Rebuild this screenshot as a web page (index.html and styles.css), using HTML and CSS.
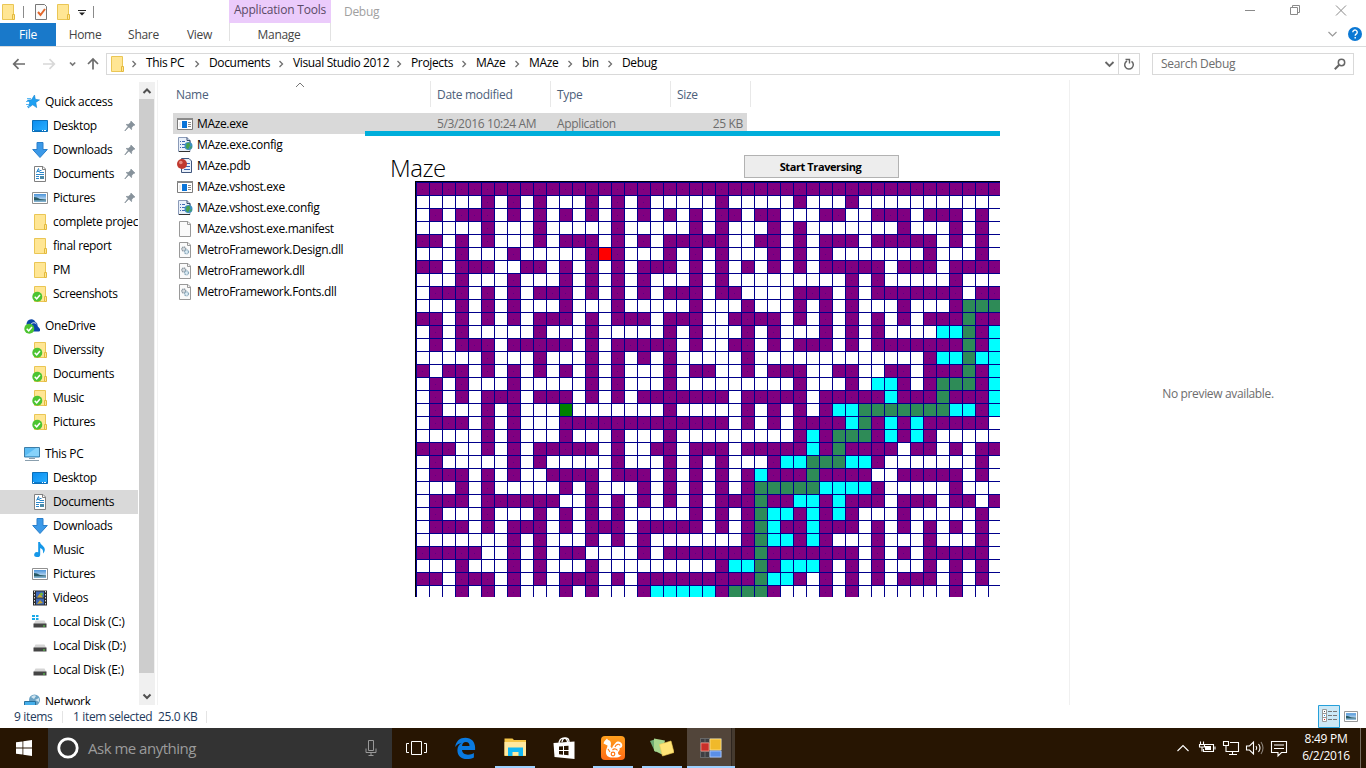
FILE: index.html
```html
<!DOCTYPE html>
<html lang="en">
<head>
<meta charset="utf-8">
<title>Debug</title>
<link rel="stylesheet" href="styles.css">
</head>
<body>
<svg class="defs" aria-hidden="true">
  <defs>
    <linearGradient id="gBlue" x1="0" y1="0" x2="1" y2="1"><stop offset="0" stop-color="#0a8df0"/><stop offset="1" stop-color="#2bb0ff"/></linearGradient>
    <linearGradient id="gSky" x1="0" y1="0" x2="0" y2="1"><stop offset="0" stop-color="#4a93d8"/><stop offset="1" stop-color="#eef7fc"/></linearGradient>
    <linearGradient id="gOrange" x1="0" y1="0" x2="0" y2="1"><stop offset="0" stop-color="#ffa01e"/><stop offset="1" stop-color="#ff6a14"/></linearGradient>
  </defs>
  <symbol id="folder" viewBox="0 0 16 16"><path d="M2.5.5h11v15h-11z" fill="#ffe694" stroke="#eac655"/><path d="M12.500 15.500v-5h2v5z" fill="#ffe694" stroke="#e3b93c"/></symbol>
  <symbol id="check" viewBox="0 0 16 16"><circle cx="5.3" cy="10.7" r="5" fill="#4cc431"/><path d="M2.7 10.8l2 2 3.3-3.8" fill="none" stroke="#fff" stroke-width="1.5"/></symbol>
  <symbol id="folderok" viewBox="0 0 16 16"><use href="#folder"/><use href="#check"/></symbol>
  <symbol id="star" viewBox="0 0 16 16"><path d="M10.500 1l.8 4.300 4.200.6-3.700 2.500.9 5.200-4-2.800-4.600 3.200 1.600-5.300-2.400-2.600 4.200-.3z" fill="#1da0f2" stroke="#1583d0" stroke-width=".6"/><path d="M3 4.500h4M2 7.500h3M2 10.500h3M3 12.500h3" stroke="#5ab9f5"/></symbol>
  <symbol id="desktop" viewBox="0 0 16 16"><path d="M.5 2.500h15v11h-15z" fill="url(#gBlue)" stroke="#0b6fb8"/><path d="M1 12.500h14" stroke="#0a7bd0"/><path d="M1 12.500h1M10 12.500h1M12 12.500h2" stroke="#fff"/></symbol>
  <symbol id="down" viewBox="0 0 16 16"><path d="M5 .5h6v7h4.300L8 15.500.7 7.500H5z" fill="#3b99e8" stroke="#2a7fca"/></symbol>
  <symbol id="doc" viewBox="0 0 16 16"><path d="M2.500.5h8.500l2.500 2.500v12.500h-11z" fill="#fff" stroke="#808080"/><path d="M10.500 .5v3h3" fill="none" stroke="#808080"/><path d="M4.500 6.500l2-4 1 4M5 5.500h2M8 4.500h1.500M8 6.500h4M4 8.500h8M4 10.500h3M4 12.500h3" fill="none" stroke="#2c87c9"/><path d="M8 10h4v3H8z" fill="#4b8aa8"/></symbol>
  <symbol id="scene" viewBox="0 0 12 8"><path d="M0 0h12v8H0z" fill="url(#gSky)"/><path d="M0 3q3 0 6 2l6 .5v1.200H0z" fill="#285a66"/><path d="M0 6.500h12V8H0z" fill="#7fb0cf"/></symbol>
  <symbol id="pic" viewBox="0 0 16 16"><path d="M.5 2.500h15v11H.5z" fill="#fff" stroke="#909090"/><use href="#scene" x="2" y="4" width="12" height="8"/></symbol>
  <symbol id="pin" viewBox="0 0 12 12"><path d="M7 1l4 4-1.300.4-1.900 1.900-.3 2.400L4.900 7 1 11 .8 10.800 4.100 6.200 2 4.500l2.600-.2 1.900-1.900z" fill="#87929b" stroke="#87929b" stroke-width=".6"/></symbol>
  <symbol id="cloud" viewBox="0 0 16 16"><path d="M3 8a4.500 4.500 0 018.500-4A3.800 3.800 0 0113.500 8l2.500 3a2 2 0 01-1 2.500H6z" fill="#0d47a8"/><path d="M6.500 7a3.500 3.500 0 016-1" fill="none" stroke="#fff" stroke-width=".8"/><use href="#check"/></symbol>
  <symbol id="pc" viewBox="0 0 16 16"><path d="M.5 1.500h15v9.500H.5z" fill="#5bbcf4" stroke="#3d7ea8"/><path d="M1 10L12 2h3v8z" fill="#86d2fa"/><path d="M5 12.500h6M1 14.500h14" stroke="#8a9fae"/></symbol>
  <symbol id="note" viewBox="0 0 16 16"><path d="M6.200 0h1.800c.3 3 4.800 4 4.800 7.500 0 1.800-.8 3-1.800 4 .6-3.500-.8-4.500-2.800-5.500v6.500a3 2.500 0 11-2-2.300z" fill="#1597e8"/></symbol>
  <symbol id="video" viewBox="0 0 16 16"><path d="M1 .5h14v15H1z" fill="#2a2a2a"/><path d="M2.500 1v15M13.500 1v15" stroke="#ddd" stroke-dasharray="1.500 1.500"/><path d="M4 1.500h8v6H4zM4 8.500h8v6H4z" fill="#3d68b8"/><path d="M5 7.500l3-4 3 4zM5 14l3-4 3 3z" fill="#c8a633"/><circle cx="9.500" cy="4" r="1.500" fill="#76b83c"/></symbol>
  <symbol id="disk" viewBox="0 0 16 16"><path d="M3.500 6.500h9l2 4h-13z" fill="#d5d5d5"/><path d="M1.500 9.500h13v4h-13z" fill="#454545"/><path d="M11 12h2" stroke="#5de04a"/></symbol>
  <symbol id="diskc" viewBox="0 0 16 16"><use href="#disk"/><path d="M0 1h3v2H0zM4 1h2.500v2H4zM0 4h3v2H0zM4 4h2.500v2H4z" fill="#19a9e8"/></symbol>
  <symbol id="net" viewBox="0 0 16 16"><circle cx="10.500" cy="6" r="5.500" fill="#6aa2c4"/><path d="M7 3q3-3 5-1l-2 3zM11 6l4-2v4z" fill="#cfe4ef"/><path d="M.5 7.500h11v7H.5z" fill="#45aeea" stroke="#28709c"/></symbol>
  <symbol id="exe" viewBox="0 0 16 16"><path d="M.5 2.500h15v11H.5z" fill="#fff" stroke="#7c7c7c"/><path d="M0 3h16" stroke="#8a8a8a" stroke-width="2"/><path d="M5 5h5v7H5z" fill="#0a74d8"/><path d="M11 6.500h3M11 8.500h3M11 10.500h3" stroke="#888"/><path d="M2 6h2v5H2z" fill="#eee"/></symbol>
  <symbol id="config" viewBox="0 0 16 16"><path d="M1.500.5H10l3 3v11H1.500z" fill="#e9f0fa" stroke="#8a9ab8"/><path d="M10 .5v3h3v3" fill="none" stroke="#35496e"/><path d="M3 4.500h1M3 7.500h1M3 10.500h1M5 4.500h3M5 7.500h3M5 10.500h3" stroke="#3e68b4"/><circle cx="11.500" cy="9" r="4" fill="#3c8fbf"/><path d="M9.500 6.500l3-1 .5 3-2 4-2-2zM13 10l2-1-1 3z" fill="#47a04b"/><path d="M2 14.500h11" stroke="#333"/></symbol>
  <symbol id="pdb" viewBox="0 0 16 16"><path d="M4.500.5H12l2.500 2.500v11.500h-10z" fill="#e9f0fa" stroke="#40567e"/><path d="M8 5.500h5M8 8.500h5M7 11.500h6" stroke="#3e68b4"/><circle cx="5" cy="6" r="5" fill="#c0392f"/><circle cx="3.800" cy="4.500" r="1.800" fill="#e58a80"/></symbol>
  <symbol id="blank" viewBox="0 0 16 16"><path d="M2.500.5h8.500l2.500 2.500v12.500h-11z" fill="#fafafa" stroke="#999"/><path d="M10.500 .5v3h3" fill="none" stroke="#999"/></symbol>
  <symbol id="dll" viewBox="0 0 16 16"><use href="#blank"/><circle cx="6.800" cy="7" r="2" fill="#d5dade" stroke="#8f9aa3" stroke-width="1.300" stroke-dasharray="1.200 .5"/><circle cx="9.500" cy="9.800" r="2" fill="#dcecf5" stroke="#8aa8ba" stroke-width="1.300" stroke-dasharray="1.200 .5"/></symbol>
  <symbol id="sep" viewBox="0 0 6 8"><path d="M1.500 1l3 3-3 3" fill="none" stroke="#6f6f6f" stroke-width="1.300"/></symbol>
</svg>

<header class="titlebar">
  <div class="quick">
    <svg class="ic"><use href="#folder"/></svg>
    <i class="bar"></i>
    <svg class="ic props" viewBox="0 0 16 16"><path d="M2.500.5h9l2 2v13h-11z" fill="#fafafa" stroke="#777"/><path d="M5 8l2.500 3L12 5" fill="none" stroke="#e2662a" stroke-width="2"/></svg>
    <svg class="ic"><use href="#folder"/></svg>
    <svg class="drop" viewBox="0 0 8 6"><path d="M0 .5h8" stroke="#222"/><path d="M1 2.500h6l-3 3z" fill="#222"/></svg>
    <i class="bar"></i>
  </div>
  <div class="context">Application Tools</div>
  <div class="caption">Debug</div>
  <svg class="winbtns" viewBox="0 0 110 20"><g fill="none" stroke="#8a8a8a"><path d="M5 10.500h10M50.500 7.500h7v7h-7zM52.500 7.500v-2h7v7h-2M96 5.500l10 10M106 5.500l-10 10"/></g></svg>
</header>
<nav class="tabs">
  <div class="tab file">File</div>
  <div class="tab home">Home</div>
  <div class="tab share">Share</div>
  <div class="tab view">View</div>
  <div class="tab manage">Manage</div>
  <svg class="help" viewBox="0 0 36 16"><path d="M1.500 6l4 4 4-4" fill="none" stroke="#999" stroke-width="1.200"/><circle cx="28" cy="8" r="7" fill="#0b78d4"/><path d="M25.800 6.300a2.200 2.200 0 114 1.200c-.8.9-1.600 1-1.600 2.300M28.200 11v1.400" fill="none" stroke="#fff" stroke-width="1.400"/></svg>
</nav>
<div class="address">
  <svg class="arrows" viewBox="0 0 106 24"><g fill="none" stroke-width="1.700"><path d="M25 12H14M18.500 7.200L13.700 12l4.800 4.800" stroke="#6c6c6c"/><path d="M43 12h11M49.500 7.200l4.800 4.800-4.800 4.800" stroke="#d8d8d8"/><path d="M70 10.500l2.600 2.600 2.600-2.600" stroke="#777"/><path d="M93 17.500V7M88 12l5-5 5 5" stroke="#6c6c6c"/></g></svg>
  <div class="crumbs">
    <svg class="ic"><use href="#folder"/></svg>
    <div class="path">
      <span><svg><use href="#sep"/></svg>This PC</span>
      <span><svg><use href="#sep"/></svg>Documents</span>
      <span><svg><use href="#sep"/></svg>Visual Studio 2012</span>
      <span><svg><use href="#sep"/></svg>Projects</span>
      <span><svg><use href="#sep"/></svg>MAze</span>
      <span><svg><use href="#sep"/></svg>MAze</span>
      <span><svg><use href="#sep"/></svg>bin</span>
      <span><svg><use href="#sep"/></svg>Debug</span>
    </div>
    <svg class="refresh" viewBox="0 0 35 20"><path d="M1.500 8l4 4 4-4" fill="none" stroke="#666" stroke-width="1.800"/><path d="M14.500 0v20" stroke="#d9d9d9"/><path d="M23 7a4.300 4.300 0 104.500.3" fill="none" stroke="#666" stroke-width="1.500"/><path d="M21.500 5.500h4v4" fill="none" stroke="#666" stroke-width="1.400"/></svg>
  </div>
  <div class="search">Search Debug
    <svg viewBox="0 0 12 12"><circle cx="7.500" cy="4.500" r="3.200" fill="none" stroke="#666" stroke-width="1.500"/><path d="M5 7L.8 11.200" stroke="#666" stroke-width="2"/></svg>
  </div>
</div>

<main class="main">
  <aside class="nav">
    <div class="root"><svg><use href="#star"/></svg>Quick access</div>
    <div class="item"><svg><use href="#desktop"/></svg>Desktop<svg class="pin"><use href="#pin"/></svg></div>
    <div class="item"><svg><use href="#down"/></svg>Downloads<svg class="pin"><use href="#pin"/></svg></div>
    <div class="item"><svg><use href="#doc"/></svg>Documents<svg class="pin"><use href="#pin"/></svg></div>
    <div class="item"><svg><use href="#pic"/></svg>Pictures<svg class="pin"><use href="#pin"/></svg></div>
    <div class="item"><svg><use href="#folder"/></svg>complete projects</div>
    <div class="item"><svg><use href="#folder"/></svg>final report</div>
    <div class="item"><svg><use href="#folder"/></svg>PM</div>
    <div class="item"><svg><use href="#folderok"/></svg>Screenshots</div>
    <div class="root gap"><svg><use href="#cloud"/></svg>OneDrive</div>
    <div class="item"><svg><use href="#folderok"/></svg>Diverssity</div>
    <div class="item"><svg><use href="#folderok"/></svg>Documents</div>
    <div class="item"><svg><use href="#folderok"/></svg>Music</div>
    <div class="item"><svg><use href="#folderok"/></svg>Pictures</div>
    <div class="root gap"><svg><use href="#pc"/></svg>This PC</div>
    <div class="item"><svg><use href="#desktop"/></svg>Desktop</div>
    <div class="item on"><svg><use href="#doc"/></svg>Documents</div>
    <div class="item"><svg><use href="#down"/></svg>Downloads</div>
    <div class="item"><svg><use href="#note"/></svg>Music</div>
    <div class="item"><svg><use href="#pic"/></svg>Pictures</div>
    <div class="item"><svg><use href="#video"/></svg>Videos</div>
    <div class="item"><svg><use href="#diskc"/></svg>Local Disk (C:)</div>
    <div class="item"><svg><use href="#disk"/></svg>Local Disk (D:)</div>
    <div class="item"><svg><use href="#disk"/></svg>Local Disk (E:)</div>
    <div class="root gap"><svg><use href="#net"/></svg>Network</div>
  </aside>
  <div class="scroll">
    <svg viewBox="0 0 16 17"><path d="M4.500 11l3.500-3.500 3.500 3.500" fill="none" stroke="#505050" stroke-width="2"/></svg>
    <div class="thumb"></div>
    <svg viewBox="0 0 16 17"><path d="M4.500 6.500L8 10l3.500-3.500" fill="none" stroke="#505050" stroke-width="2"/></svg>
  </div>
  <section class="list">
    <div class="head"><span>Name<svg class="sort" viewBox="0 0 10 6"><path d="M1 5l4-4 4 4" fill="none" stroke="#777"/></svg></span><span>Date modified</span><span>Type</span><span>Size</span></div>
    <div class="row on"><span><svg><use href="#exe"/></svg>MAze.exe</span><span>5/3/2016 10:24 AM</span><span>Application</span><span class="size">25 KB</span></div>
    <div class="row"><span><svg><use href="#config"/></svg>MAze.exe.config</span></div>
    <div class="row"><span><svg><use href="#pdb"/></svg>MAze.pdb</span></div>
    <div class="row"><span><svg><use href="#exe"/></svg>MAze.vshost.exe</span></div>
    <div class="row"><span><svg><use href="#config"/></svg>MAze.vshost.exe.config</span></div>
    <div class="row"><span><svg><use href="#blank"/></svg>MAze.vshost.exe.manifest</span></div>
    <div class="row"><span><svg><use href="#dll"/></svg>MetroFramework.Design.dll</span></div>
    <div class="row"><span><svg><use href="#dll"/></svg>MetroFramework.dll</span></div>
    <div class="row"><span><svg><use href="#dll"/></svg>MetroFramework.Fonts.dll</span></div>
  </section>
  <section class="preview">No preview available.</section>
</main>

<footer class="status">
  <span class="count">9 items</span><i></i><span class="sel">1 item selected</span><span class="kb">25.0 KB</span><i></i>
  <div class="modes">
    <svg class="details" viewBox="0 0 22 23"><path d="M.5.5h21v22H.5z" fill="#cbe8f6" stroke="#26a0da"/><path d="M4.500 4.500h4v12h-4zM4.500 8.500h4M4.500 12.500h4" fill="#fff" stroke="#999"/><path d="M6 6.500h1" stroke="#555"/><path d="M6 10.500h1" stroke="#2a8fe0"/><path d="M6 14.500h1" stroke="#d22"/><path d="M10 6.500h4M15 6.500h4M10 10.500h4M15 10.500h4M10 14.500h4M15 14.500h4" stroke="#777"/></svg>
    <svg class="large" viewBox="0 0 14 12"><path d="M.5.5h13v10H.5z" fill="#fff" stroke="#999"/><use href="#scene" x="2" y="2" width="10" height="7"/></svg>
  </div>
</footer>

<div class="taskbar">
  <div class="start"><svg viewBox="0 0 16 16"><path d="M0 2.300l6.500-.9v6.100H0zM7.300 1.300L16 0v7.500H7.300zM0 8.400h6.500v6.200L0 13.700zM7.300 8.400H16V16l-8.700-1.200z" fill="#fff"/></svg></div>
  <div class="ask">
    <svg class="ring" viewBox="0 0 22 22"><circle cx="11" cy="11" r="9.200" fill="none" stroke="#fff" stroke-width="2.800"/></svg>
    <span>Ask me anything</span>
    <svg class="mic" viewBox="0 0 12 18"><path d="M3.500 1.500h5v10h-5zM1 9.500v4h10v-4M6 13.500v3M3.500 16.500h5" fill="none" stroke="#999"/></svg>
  </div>
  <div class="task lead"><svg viewBox="0 0 24 24"><path d="M7.500 5.500h10v13h-10zM5 7.500H2.500v9H5M20 7.500h2.500v9H20" fill="none" stroke="#fff"/></svg></div>
  <div class="task lead"><svg viewBox="0 0 24 24"><path d="M2.200 11C3 4.800 7 1.700 12.300 1.700c6.200 0 9.800 4.300 9.800 9.800v2.600H9c.2 3.200 2.800 4.600 6 4.600 2.400 0 4.300-.7 5.900-1.700v4.400c-2 1.100-4.300 1.700-7 1.700-5.700 0-9.500-3.600-9.500-8.900 0-3.500 1.700-6 4.500-7.400C5.900 7.500 3.700 9 2.200 11zM9.100 10h7.400c0-2.600-1.200-4-3.600-4-2.300 0-3.600 1.500-3.800 4z" fill="#0a7ae0" fill-rule="evenodd"/></svg></div>
  <div class="task open"><svg viewBox="0 0 24 24"><path d="M1.500 4V2.500h8L11 4h12v16H1.500z" fill="#f5c648"/><path d="M1.500 6h21.500v13.500H1.500z" fill="#ffe9a0"/><path d="M5 20v-8.500h15V20h-4.500v-4h-6v4z" fill="#12b8f5"/></svg></div>
  <div class="task"><svg viewBox="0 0 24 24"><path d="M1.500 7l21-1.500v17.500l-20-2z" fill="#fff"/><path d="M7 8c0-7 8-8 8.500-2M10 6c1-6 7-5 7 0" fill="none" stroke="#fff" stroke-width="1.300"/><path d="M7 10.500l4-.3v3.800H7zM12 10.100l4.500-.3V14H12zM7 15h4v3.700l-4-.4zM12 15h4.500v4.300L12 18.800z" fill="#271502"/></svg></div>
  <div class="task open"><svg viewBox="0 0 24 24"><rect width="24" height="24" rx="4" fill="url(#gOrange)"/><path d="M2.500 7.500C3 4.500 5 4 6 2.500l1 1.500c3 .5 3.500 3.500 2.500 6.500l1.500 2c.5-2.500 2-3.500 3.500-5.500 2-2.500 5.500-1.500 6.500 1 .9 2.500-.5 4-2.500 4 1 2-1 3-1.500 4.500-.3 2 1.500 3 3.500 2.500-2 2.500-4.500 2.500-6 2.500H10c-3.500-.5-5.500-3-5-6.500.3-2.500 1.500-3.500 1.500-5.500z" fill="#fff"/><path d="M14 11c1-3 4.500-3.500 5-1.500M11.500 14c2-2 4-1 5 .5M7 13l2 3" fill="none" stroke="#ff7f18" stroke-width="1.100"/><circle cx="12" cy="18" r="1.800" fill="none" stroke="#ff7817" stroke-width="1.200"/></svg></div>
  <div class="task open"><svg viewBox="0 0 24 24"><path d="M0 5l6-2 4 11-5 2z" fill="#6fab74"/><path d="M4 2.500l11 2-3 14-8-4z" fill="#a9d78e"/><path d="M9.500 8.500L21 5l3 11.500-11.500 3.500z" fill="#ffe477" stroke="#f3cf55" stroke-width=".6"/></svg></div>
  <div class="task open active"><svg viewBox="0 0 24 24"><path d="M1 2h22v20H1z" fill="#686868"/><path d="M2 7h8v8H2z" fill="#c8302a" stroke="#ef8f80" stroke-width=".8"/><path d="M11 3h11v11H11z" fill="#f0b92b" stroke="#ffe18a" stroke-width=".8"/><path d="M11 15h11v6H11z" fill="#5b8fe8" stroke="#a9c6ff" stroke-width=".8"/><path d="M2 3h3.500v3H2zM6.500 3H10v3H6.500zM2 16h3.500v5H2zM6.500 16H10v5H6.500z" fill="#3e3e42"/></svg></div>
  <svg class="tray" viewBox="0 0 120 24"><g fill="none" stroke="#fff" stroke-width="1.100"><path d="M8.500 15L14 9.500l5.500 5.500"/><path d="M36 8.500h8.500v7h-10v-2.500M46 10.500v3M31.500 5.500v3M34.500 5.500v3M30.500 8.500h5v2.500h-5zM33 11v4.500"/><path d="M54.500 5.500v4h5v-4zM61 6.500h8.500v9H57v-6M63.500 15.500v3M60 18.500h8"/><path d="M77.500 10h3l4-4v12l-4-4h-3zM87 10q1.500 2 0 4M89.500 8q3 4 0 8"/><path d="M92 6q4 6 0 12" stroke="#8b8279"/><path d="M102.500 5.500h15v11h-5l-3.500 3.500v-3.500h-6.500zM105 9h10M105 12.500h10"/></g><path d="M36 10h6v4h-6z" fill="#fff"/></svg>
  <div class="clock">8:49 PM<br>6/2/2016</div>
  <i class="peek"></i>
</div>

<div class="app">
  <div class="apphead"><h1>Maze</h1><button>Start Traversing</button></div>
  <svg class="maze" id="maze" width="585" height="416" shape-rendering="crispEdges"></svg>
</div>
<script src="maze.js"></script>
</body>
</html>
```
FILE: styles.css
```css
* { box-sizing: border-box; }
html, body { margin: 0; height: 100%; overflow: hidden; }
body {
  width: 1366px; height: 768px; display: flex; flex-direction: column;
  background: #fff; color: #000; position: relative;
  font: 12px/16px "Open Sans", "Noto Sans", sans-serif; letter-spacing: -.35px; white-space: nowrap;
}
svg { display: block; flex: none; }
.defs { position: absolute; width: 0; height: 0; }
.ic { width: 16px; height: 16px; }

.titlebar { height: 23px; display: flex; }
.quick { width: 229px; display: flex; align-items: center; }
.quick .bar { width: 1px; height: 12px; background: #8a8a8a; margin: 0 9px 0 7px; }
.quick .props { margin: 0 6px 0 0; }
.quick .drop { width: 8px; height: 6px; margin: 3px 0 0 7px; }
.context { width: 102px; height: 23px; background: #ebcbfb; color: #5a4a66; text-align: center; line-height: 20px; letter-spacing: -.2px; }
.caption { padding-left: 13px; color: #a0a0a0; line-height: 24px; letter-spacing: -.3px; }
.winbtns { width: 110px; height: 20px; margin-left: auto; margin-right: 16px; }

.tabs { height: 24px; display: flex; border-bottom: 1px solid #dadbdc; color: #444; line-height: 24px; text-align: center; letter-spacing: -.3px; }
.file { width: 56px; background: #1979ca; color: #fff; }
.home { width: 58px; }
.share { width: 59px; }
.view { width: 56px; padding-right: 3px; }
.manage { width: 102px; height: 18px; border: solid #e2e2e2; border-width: 0 1px; padding-right: 2px; }
.help { width: 36px; height: 16px; margin: 3px 3px 0 auto; }

.address { height: 33px; display: flex; align-items: center; }
.arrows { width: 106px; height: 24px; }
.crumbs { width: 1034px; height: 22px; border: 1px solid #d9d9d9; display: flex; align-items: center; }
.crumbs .ic { margin: 0 6px 0 2px; }
.path { flex: 1; display: grid; grid-template-columns: 63px 84px 118px 65px 53px 53px 40px 1fr; line-height: 18px; padding-bottom: 1px; }
.path span { display: flex; align-items: center; }
.path span svg { width: 6px; height: 8px; margin: 1px 9px 0 0; }
.refresh { width: 35px; height: 20px; }
.search { width: 202px; height: 22px; margin-left: 12px; border: 1px solid #d9d9d9; color: #6d6d6d; padding: 0 7px 0 8px; display: flex; align-items: center; justify-content: space-between; letter-spacing: -.3px; }
.search svg { width: 12px; height: 12px; margin-top: 1px; }

.main { height: 625px; display: flex; }
.nav { width: 139px; overflow: hidden; padding-top: 10px; }
.nav div { height: 24px; width: 138px; display: flex; align-items: center; overflow: hidden; }
.nav .item { padding-left: 32px; }
.nav .root { padding-left: 24px; letter-spacing: -.3px; }
.nav .gap { margin-top: 8px; }
.nav svg { width: 16px; height: 16px; margin-right: 5px; }
.nav svg.pin { width: 12px; height: 12px; margin: 0 2px 0 auto; }
.on { background: #d9d9d9; }
.scroll { width: 16px; background: #f0f0f0; display: flex; flex-direction: column; margin-top: 2px; }
.scroll svg { width: 16px; height: 17px; }
.thumb { height: 574px; width: 15px; background: #cdcdcd; margin-bottom: 15px; }
.list { width: 913px; margin-left: 2px; border-left: 1px solid #f2f2f2; border-right: 1px solid #f0f0f0; padding-left: 15px; }
.head { height: 33px; display: grid; grid-template-columns: 258px 120px 120px 80px; color: #4c607a; letter-spacing: -.3px; }
.head span { position: relative; height: 26px; margin-top: 1px; border-right: 1px solid #e8e8e8; padding-left: 6px; line-height: 28px; }
.head span:first-child { padding-left: 3px; }
.sort { position: absolute; left: 122px; top: 1px; width: 10px; height: 6px; }
.row { width: 574px; height: 21px; display: grid; grid-template-columns: 258px 120px 120px 76px; line-height: 21px; }
.row span { padding-left: 6px; color: #6d6d6d; }
.row span:first-child { display: flex; align-items: center; padding-left: 4px; color: #000; }
.row svg { width: 16px; height: 16px; margin-right: 4px; }
.row .size { text-align: right; padding-right: 4px; }
.preview { flex: 1; text-align: center; line-height: 628px; color: #6d6d6d; }

.status { height: 23px; display: flex; align-items: center; color: #1e395b; padding-left: 14px; }
.status i { width: 1px; height: 12px; background: #e4e4e4; }
.count { width: 48px; }
.sel { margin-left: 10px; width: 85px; }
.kb { width: 48px; }
.modes { margin-left: auto; display: flex; align-items: center; gap: 4px; padding-right: 8px; }
.details { width: 22px; height: 23px; }
.large { width: 14px; height: 12px; }

.taskbar { height: 40px; background: #271502; display: flex; align-items: center; }
.start { width: 48px; display: flex; justify-content: center; }
.start svg { width: 16px; height: 16px; }
.ask { width: 344px; height: 40px; background: #333; display: flex; align-items: center; color: #9b9b9b; font-size: 15px; letter-spacing: -.5px; }
.ring { width: 22px; height: 22px; margin: 0 9px; }
.mic { width: 12px; height: 18px; margin: 0 15px 0 auto; }
.task { width: 49px; height: 40px; display: flex; align-items: center; justify-content: center; position: relative; }
.task svg { width: 24px; height: 24px; }
.task.lead svg { margin-right: 2px; }
.task.open::after { content: ""; position: absolute; left: 5px; right: 4px; bottom: 0; height: 2px; background: #9dd0ff; }
.task.active { background: linear-gradient(90deg, #52453a 0 44px, #2e251e 44px 45px, #453a2f 45px); margin-left: 1px; width: 48px; }
.task.active::after { left: 0; right: 0; }
.tray { width: 120px; height: 24px; margin-left: auto; }
.clock { width: 71px; color: #fff; text-align: center; line-height: 17px; padding: 0 0 2px 3px; letter-spacing: -.3px; }
.peek { width: 6px; height: 40px; border-left: 1px solid #766c60; }

.app { position: absolute; left: 365px; top: 131px; width: 635px; height: 466px; background: #fff; border-top: 5px solid #00aedb; overflow: hidden; }
.apphead { height: 45px; display: flex; }
.apphead h1 { margin: 16px 0 0 25px; width: 354px; font-size: 24px; line-height: 32px; font-weight: 300; letter-spacing: -.5px; }
.apphead button { width: 155px; height: 23px; margin-top: 19px; border: 1px solid #b2b2b2; background: #ededed; font: bold 11px/21px "Open Sans", sans-serif; letter-spacing: -.4px; padding: 0 2px 0 0; }
.maze { margin-left: 50px; width: 585px; height: 416px; }
```
FILE: maze.js
```js
// Each row lists cell columns for the two 23-column panels ("left | right").
// A letter switches the cell kind: p wall, s path, c visited, r start, g goal.
const rows = [
  "p0-22 | p0-22",
  "p5,7,9,13,15,17 | p1,7,11",
  "p1,3-5,7,9,11,13,15,17,19,21 | p1,2,4,5,9,10,13-15,17-19,21",
  "p5,9,15,21 | p1,5,7,15,19,21",
  "p0,1,3,5,9,11-13,15,17,19-22 | p0,1,4,5,7,9-11,13-17,19,21",
  "p3,7,13,15,19,21 r14 | p1,5,7,9,17,21",
  "p0,1,3-5,8,9,11,13,15,17-19,21 | p1,3,5,7,9-13,15-17,19-22",
  "p3,7,11,13,15,17,21 | p1,11,13,19",
  "p1-3,5,7,9-11,13,15,17,19-21 | p1,2,7-9,11,13-19,21,22",
  "p3,5,7,11,15,21 | p3,7,9,11,15,19 s20-22",
  "p0,1,3,5,7,9-11,13,15-17,19-21 | p2-5,7,9,11,13,15,17-19,21,22 s20",
  "p1,3,9,13,19,21 | p3,5,9,11,13,21 c18,19,22 s20",
  "p1,3-5,7-11,13,15-19,21 | p2,3,5,7-9,11,13-19,21 s20 c22",
  "p5,9,13,15,17,19 | p3,17 c18,19,21,22 s20",
  "p0,2,3,5,7,9,11,13,15,19,21,22 | p0,3,5-7,10,11,14,15,17-19,21 s20 c22",
  "p1,3,7,13,15,19 | p7,11,15,17,21 c13,14,22 s18-20",
  "p1,3,5-7,9-11,13,15,17-22 | p0,1,3-7,9-13,15-17,19-21 c14,22 s18",
  "p1,5,7,19 g11 | p3,5,7,9,21 c10,11,19,20,22 s12-18",
  "p1-3,5,7,11-22 | p0,1,3,5,7-10,13,15,17-21 c11,14,16 s12",
  "p5,7,11,15,19 | p7,9,13,15,17 c8,14,16 s10-12",
  "p0-2,5,7,9-13,15,18,19,21,22 | p0,1,3-7,9,11-14,16,17,19,21,22 c8 s10",
  "p1,7,9,15,19,21 | p1,5,13,21 c6,7,11,12 s8-10",
  "p1-3,5,7,10-13,15-17,19,21 | p1,3,5-7,9-12,15-19,21 c4 s8",
  "p3,5,11,13,17,19,21 | p1,3,13,19 s4-8 c9-12",
  "p1-3,5-10,13,15,17,19,21 | p1-3,5,6,9,11-13,15-17,19,20,22 s4 c7,8,10",
  "p1,5,9,11,13,15,21 | p1,3,7,9,11,15,21 s4 c5,6,8,10",
  "p1-3,5,7-9,11,13-15,17-21 | p1,3,6,7,9-11,13,15,17,19,21 s4 c5,8",
  "p7,9,13,15,17 | p3,7,9,13,17,21 s4 c5,6,8",
  "p0-4,7,9,11,12,17,19-22 | p0-3,5-11,13,15,17-21 s4",
  "p3,7,9,13 | p1,5,9,11,13,17,19,21 c2,3,6-8 s4",
  "p0,1,3-5,7,9,11-13,15,17-22 | p0-3,7,9,11,13,15-17,19,21 s4 c5,6",
  "p3,5,7,11,13,17 c18-22 | p1,5,9,11,19 c0 s2-4"
];
const fills = { p: "#800080", s: "#2e8b57", c: "#00ffff", r: "#ff0000", g: "#008000" };
const size = 13;
let out = '<rect x="0" y="0" width="585" height="416" fill="#fff"/>';
rows.forEach((row, y) => row.split(" | ").forEach((panel, side) => {
  panel.split(" ").forEach(group => {
    const kind = group[0];
    group.slice(1).split(",").forEach(range => {
      const [a, b = a] = range.split("-").map(Number);
      for (let x = a; x <= b; x++) {
        const px = 1 + (x + side * 22) * size, py = 1 + y * size;
        out += `<rect x="${px}" y="${py}" width="13" height="13" fill="${fills[kind]}"/>`;
        if (kind === "p") out += `<rect x="${px + 6}" y="${py + 7}" width="1" height="1" fill="#5a0085"/>`;
      }
    });
  });
}));
for (let i = 0; i < 46; i++) out += `<rect x="${1 + i * size}" y="0" width="1" height="416" fill="#00008b"/>`;
for (let i = 0; i < 33; i++) out += `<rect x="0" y="${1 + i * size}" width="585" height="1" fill="#00008b"/>`;
out += '<path d="M0 0h585v1H1v415H0z" fill="#000"/>';
document.getElementById("maze").innerHTML = out;
```
